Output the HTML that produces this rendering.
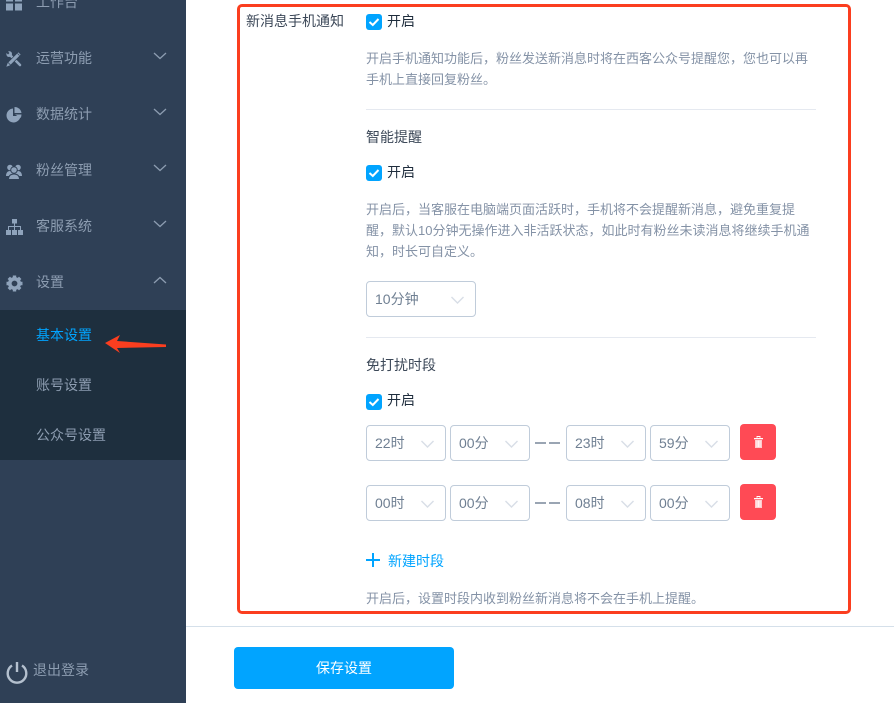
<!DOCTYPE html>
<html><head><meta charset="utf-8">
<style>
html,body{margin:0;padding:0;background:#fff}
body{width:894px;height:703px;position:relative;overflow:hidden;font-family:"Liberation Sans","Noto Sans CJK SC",sans-serif;font-size:14px}
.t{position:absolute;white-space:nowrap;line-height:20px}
.side{position:absolute;left:0;top:0;width:186px;height:703px;background:#2f4056}
.sub{position:absolute;left:0;top:310px;width:186px;height:150px;background:#1e2f3e}
.m{color:#8d9db1;font-size:14px}
.d{color:#8492a6;font-size:13px;line-height:21px}
.l{color:#3c4858;font-size:14px}
.sel{position:absolute;box-sizing:border-box;height:36px;border:1px solid #c0ccda;border-radius:4px;background:#fff;color:#6f7f92;font-size:14px;line-height:35px;padding-left:8px}
.sel svg{position:absolute;top:14px;right:11px}
.cb{position:absolute;left:366px;width:16px;height:16px;border-radius:3px;background:#01a4ff}
.del{position:absolute;left:740px;width:36px;height:36px;border-radius:4px;background:#ff4a55}
.hr{position:absolute;left:366px;width:450px;height:1px;background:#e5e9f0}
.dash{position:absolute;width:11px;height:2px;background:#9aa5b3}
svg{position:absolute;display:block}
</style></head><body>
<div class="side"></div>
<div class="sub"></div>

<svg style="left:6px;top:-7px" width="16" height="20" viewBox="0 0 16 20"><path d="M0 0h7v7H0zM9 0h7v7H9zM0 9h7v7H0zM9 9h7v7H9z" fill="#8fa3bb" transform="translate(0 1.5)"/></svg>
<div class="t m" style="left:36px;top:-8px">工作台</div>

<svg style="left:6px;top:51px" width="16" height="16" viewBox="0 0 16 16"><path d="M4 4 14 14" stroke="#8fa3bb" stroke-width="2.600" fill="none" stroke-linecap="round"/><path d="M.5 2 2 3.500 3.500 2 2 .5C3.500-.2 6 .5 6 3c0 1.500-1.500 3-3 3C1 6 0 4 .5 2z" fill="#8fa3bb"/><path d="M13.500 2.500 3 13" stroke="#2f4056" stroke-width="4.500" fill="none"/><path d="M13.500 2.500 3.500 12.500" stroke="#8fa3bb" stroke-width="3.200" fill="none"/><path d="M1.800 11.800.3 15.700 4.200 14.200z" fill="#8fa3bb"/><path d="M11.500 2.500 13.500 4.500" stroke="#2f4056" stroke-width=".7" fill="none"/></svg>
<div class="t m" style="left:36px;top:48px">运营功能</div>
<svg style="left:153px;top:52px" width="14" height="8" viewBox="0 0 14 8"><path d="M1 1l6 5.500L13 1" stroke="#8d9db1" stroke-width="1.300" fill="none"/></svg>

<svg style="left:6px;top:107px" width="16" height="16" viewBox="0 0 16 16"><path d="M7 1.500A7 7 0 1 0 14.500 9H7z" fill="#8fa3bb"/><path d="M8.500 0A7 7 0 0 1 15.500 6H8.500z" fill="#8fa3bb"/><path d="M9 7.500h6.500a7 7 0 0 1-1 3.500z" fill="#8fa3bb"/></svg>
<div class="t m" style="left:36px;top:104px">数据统计</div>
<svg style="left:153px;top:108px" width="14" height="8" viewBox="0 0 14 8"><path d="M1 1l6 5.500L13 1" stroke="#8d9db1" stroke-width="1.300" fill="none"/></svg>

<svg style="left:6px;top:163.500px" width="16" height="16" viewBox="0 0 16 16"><g fill="#8fa3bb"><circle cx="4" cy="3.500" r="2.800"/><circle cx="12" cy="3.500" r="2.800"/><path d="M0 12c0-3 1.500-5 4-5s4 2 4 5zM8 12c0-3 1.500-5 4-5s4 2 4 5z"/></g><g fill="#8fa3bb" stroke="#2f4056" stroke-width="1"><circle cx="8" cy="6" r="3.300"/><path d="M2.500 15.500c0-3.500 2-5.500 5.500-5.500s5.500 2 5.500 5.500z"/></g></svg>
<div class="t m" style="left:36px;top:160px">粉丝管理</div>
<svg style="left:153px;top:164px" width="14" height="8" viewBox="0 0 14 8"><path d="M1 1l6 5.500L13 1" stroke="#8d9db1" stroke-width="1.300" fill="none"/></svg>

<svg style="left:6px;top:219px" width="17" height="16" viewBox="0 0 17 16"><path d="M6 0h5v4.500H6zM0 11h5v5H0zM6 11h5v5H6zM12 11h5v5h-5z" fill="#8fa3bb"/><path d="M8.500 4v7M2.500 11V7.500h12V11" stroke="#8fa3bb" fill="none"/></svg>
<div class="t m" style="left:36px;top:216px">客服系统</div>
<svg style="left:153px;top:220px" width="14" height="8" viewBox="0 0 14 8"><path d="M1 1l6 5.500L13 1" stroke="#8d9db1" stroke-width="1.300" fill="none"/></svg>

<svg style="left:6px;top:274.500px" width="17" height="17" viewBox="0 0 17 17"><circle cx="8.500" cy="8.500" r="6.500" fill="#8fa3bb"/><path d="M8.500.5v16M.5 8.500h16M2.800 2.800 14.200 14.200M14.200 2.800 2.800 14.200" stroke="#8fa3bb" stroke-width="3.400" fill="none"/><circle cx="8.500" cy="8.500" r="2.900" fill="#2f4056"/></svg>
<div class="t m" style="left:36px;top:272px">设置</div>
<svg style="left:153px;top:276px" width="14" height="8" viewBox="0 0 14 8"><path d="M1 7l6-5.500L13 7" stroke="#8d9db1" stroke-width="1.300" fill="none"/></svg>

<div class="t" style="left:36px;top:325px;color:#01a4ff">基本设置</div>
<div class="t m" style="left:36px;top:375px">账号设置</div>
<div class="t m" style="left:36px;top:425px">公众号设置</div>
<svg style="left:104px;top:334px" width="64" height="22" viewBox="0 0 64 22"><path d="M1 9 16 1 13 7 62 10.500V13L13 14 16 19z" fill="#fb3e1f"/></svg>

<svg style="left:5px;top:660px" width="24" height="24" viewBox="0 0 24 24"><path d="M7 5.500a9.300 9.300 0 1 0 10 0" fill="none" stroke="#b4c0ce" stroke-width="2.400"/><path d="M12 2v10" stroke="#b4c0ce" stroke-width="2.400"/></svg>
<div class="t m" style="left:33px;top:660px">退出登录</div>

<div style="position:absolute;left:186px;top:626px;width:708px;height:1px;background:#d5e0ea"></div>
<div style="position:absolute;left:234px;top:647px;width:220px;height:42px;border-radius:4px;background:#01a4ff;color:#fff;text-align:center;line-height:42px;font-size:14px">保存设置</div>

<div class="t l" style="left:246px;top:11px">新消息手机通知</div>

<div class="cb" style="top:14px"></div>
<svg style="left:366px;top:14px" width="16" height="16" viewBox="0 0 16 16"><path d="M3.500 8 6.800 11 12.500 5" stroke="#fff" stroke-width="2" fill="none"/></svg>
<div class="t" style="left:387px;top:11px;color:#1f2d3d">开启</div>

<div class="t d" style="left:366px;top:48px">开启手机通知功能后，粉丝发送新消息时将在西客公众号提醒您，您也可以再<br>手机上直接回复粉丝。</div>
<div class="hr" style="top:109px"></div>

<div class="t l" style="left:366px;top:127px">智能提醒</div>
<div class="cb" style="top:165px"></div>
<svg style="left:366px;top:165px" width="16" height="16" viewBox="0 0 16 16"><path d="M3.500 8 6.800 11 12.500 5" stroke="#fff" stroke-width="2" fill="none"/></svg>
<div class="t" style="left:387px;top:162px;color:#1f2d3d">开启</div>
<div class="t d" style="left:366px;top:199px">开启后，当客服在电脑端页面活跃时，手机将不会提醒新消息，避免重复提<br>醒，默认10分钟无操作进入非活跃状态，如此时有粉丝未读消息将继续手机通<br>知，时长可自定义。</div>

<div class="sel" style="left:366px;top:281px;width:110px">10分钟<svg width="13" height="8" viewBox="0 0 13 8"><path d="M.5 1l6 6 6-6" stroke="#d8dee6" stroke-width="1.400" fill="none"/></svg></div>
<div class="hr" style="top:337px"></div>

<div class="t l" style="left:366px;top:355px">免打扰时段</div>
<div class="cb" style="top:394px"></div>
<svg style="left:366px;top:394px" width="16" height="16" viewBox="0 0 16 16"><path d="M3.500 8 6.800 11 12.500 5" stroke="#fff" stroke-width="2" fill="none"/></svg>
<div class="t" style="left:387px;top:390px;color:#1f2d3d">开启</div>

<div class="sel" style="left:366px;top:425px;width:80px">22时<svg width="13" height="8" viewBox="0 0 13 8"><path d="M.5 1l6 6 6-6" stroke="#d8dee6" stroke-width="1.400" fill="none"/></svg></div>
<div class="sel" style="left:450px;top:425px;width:80px">00分<svg width="13" height="8" viewBox="0 0 13 8"><path d="M.5 1l6 6 6-6" stroke="#d8dee6" stroke-width="1.400" fill="none"/></svg></div>
<div class="dash" style="left:535px;top:442px"></div>
<div class="dash" style="left:549px;top:442px"></div>
<div class="sel" style="left:566px;top:425px;width:80px">23时<svg width="13" height="8" viewBox="0 0 13 8"><path d="M.5 1l6 6 6-6" stroke="#d8dee6" stroke-width="1.400" fill="none"/></svg></div>
<div class="sel" style="left:650px;top:425px;width:80px">59分<svg width="13" height="8" viewBox="0 0 13 8"><path d="M.5 1l6 6 6-6" stroke="#d8dee6" stroke-width="1.400" fill="none"/></svg></div>
<div class="del" style="top:424px"><svg style="left:13.500px;top:12px" width="9" height="12" viewBox="0 0 9 12"><path d="M3 1.800V.5h3v1.300" fill="none" stroke="#fff" stroke-width=".9"/><path d="M0 2h9v1.300H0z" fill="#fff"/><path d="M1 4h7v8H1z" fill="#ffc9cc"/><path d="M3 4.500v6.500M4.500 4.500v6.500M6 4.500v6.500" stroke="#fff" stroke-width=".8"/></svg></div>

<div class="sel" style="left:366px;top:485px;width:80px">00时<svg width="13" height="8" viewBox="0 0 13 8"><path d="M.5 1l6 6 6-6" stroke="#d8dee6" stroke-width="1.400" fill="none"/></svg></div>
<div class="sel" style="left:450px;top:485px;width:80px">00分<svg width="13" height="8" viewBox="0 0 13 8"><path d="M.5 1l6 6 6-6" stroke="#d8dee6" stroke-width="1.400" fill="none"/></svg></div>
<div class="dash" style="left:535px;top:502px"></div>
<div class="dash" style="left:549px;top:502px"></div>
<div class="sel" style="left:566px;top:485px;width:80px">08时<svg width="13" height="8" viewBox="0 0 13 8"><path d="M.5 1l6 6 6-6" stroke="#d8dee6" stroke-width="1.400" fill="none"/></svg></div>
<div class="sel" style="left:650px;top:485px;width:80px">00分<svg width="13" height="8" viewBox="0 0 13 8"><path d="M.5 1l6 6 6-6" stroke="#d8dee6" stroke-width="1.400" fill="none"/></svg></div>
<div class="del" style="top:484px"><svg style="left:13.500px;top:12px" width="9" height="12" viewBox="0 0 9 12"><path d="M3 1.800V.5h3v1.300" fill="none" stroke="#fff" stroke-width=".9"/><path d="M0 2h9v1.300H0z" fill="#fff"/><path d="M1 4h7v8H1z" fill="#ffc9cc"/><path d="M3 4.500v6.500M4.500 4.500v6.500M6 4.500v6.500" stroke="#fff" stroke-width=".8"/></svg></div>

<svg style="left:366px;top:553px" width="14" height="14" viewBox="0 0 14 14"><path d="M7 0v14M0 7h14" stroke="#01a4ff" stroke-width="2"/></svg>
<div class="t" style="left:388px;top:551px;color:#01a4ff">新建时段</div>
<div class="t d" style="left:366px;top:588px">开启后，设置时段内收到粉丝新消息将不会在手机上提醒。</div>

<div style="position:absolute;left:237px;top:4px;width:614px;height:610px;box-sizing:border-box;border:3px solid #fb3e1f;border-radius:5px"></div>
</body></html>
